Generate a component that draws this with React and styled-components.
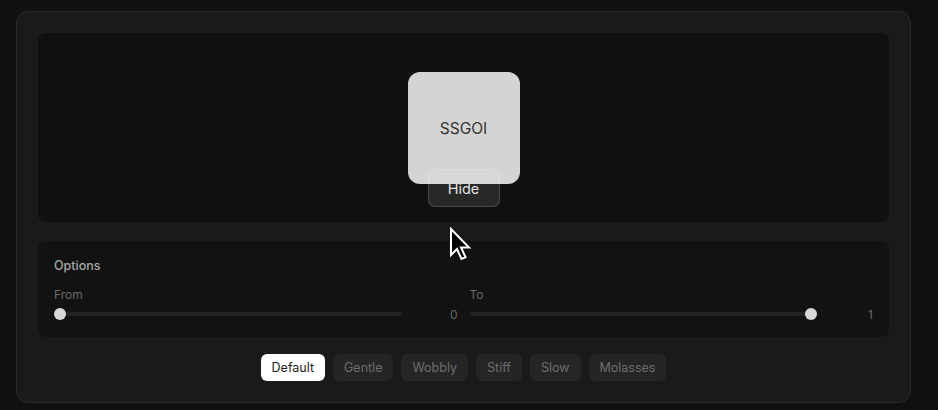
import React from 'react'
import styled, { createGlobalStyle } from 'styled-components'

const GlobalStyle = createGlobalStyle`
  html, body {
    margin: 0;
    background: #0f100f;
    font-family: Inter, "Noto Sans", sans-serif;
  }
`

const presets = ['Default', 'Gentle', 'Wobbly', 'Stiff', 'Slow', 'Molasses']

function Slider({ label, value }) {
  return (
    <Field>
      <FieldLabel>{label}</FieldLabel>
      <SliderRow>
        <Track>
          <Thumb style={{ left: `calc(${value} * (100% - 12px))` }} />
        </Track>
        <Value>{value}</Value>
      </SliderRow>
    </Field>
  )
}

function Cursor() {
  return (
    <CursorWrap>
      <svg width="24" height="36" viewBox="0 0 24 36">
        <path
          d="M2 2 L2 28 L8 22 L12.5 32 L16.5 30.2 L12 20.5 L20 20.5 Z"
          fill="#000"
          stroke="#fff"
          strokeWidth="2"
          strokeLinejoin="miter"
        />
      </svg>
    </CursorWrap>
  )
}

export default function App() {
  return (
    <>
      <GlobalStyle />
      <Page>
        <Card>
          <Preview>
            <Box>SSGOI</Box>
            <HideButton>Hide</HideButton>
          </Preview>
          <Options>
            <OptionsTitle>Options</OptionsTitle>
            <Sliders>
              <Slider label="From" value={0} />
              <Slider label="To" value={1} />
            </Sliders>
          </Options>
          <Presets>
            {presets.map((p, i) => (
              <Preset key={p} $active={i === 0}>{p}</Preset>
            ))}
          </Presets>
          <Cursor />
        </Card>
      </Page>
    </>
  )
}

const Page = styled.div`
  padding: 11px 27px 7px 16px;
`

const Card = styled.div`
  position: relative;
  box-sizing: border-box;
  width: 895px;
  height: 392px;
  padding: 21px;
  background: #1a1a1a;
  border: 1px solid #2a2a2a;
  border-radius: 12px;
  display: flex;
  flex-direction: column;
`

const Preview = styled.div`
  height: 189px;
  box-sizing: border-box;
  padding-top: 39px;
  background: #0f110f;
  border-radius: 8px;
  display: flex;
  flex-direction: column;
  align-items: center;
`

const Box = styled.div`
  width: 112px;
  height: 112px;
  border-radius: 12px;
  background: #d4d4d2;
  color: #333;
  font-size: 15.5px;
  display: flex;
  align-items: center;
  justify-content: center;
`

const HideButton = styled.button`
  position: relative;
  margin-top: -15px;
  width: 72px;
  height: 38px;
  border-radius: 7px;
  border: 1px solid rgba(255, 255, 255, 0.16);
  background: rgba(255, 255, 255, 0.1);
  color: #e2e2e2;
  font-family: inherit;
  font-size: 14.5px;
`

const Options = styled.div`
  margin-top: 19px;
  height: 96px;
  box-sizing: border-box;
  padding: 17px 16px 16px;
  background: #111211;
  border-radius: 8px;
`

const OptionsTitle = styled.div`
  color: #a8a8a8;
  font-size: 12.5px;
  font-weight: 500;
  line-height: 16px;
`

const Sliders = styled.div`
  margin-top: 13px;
  display: grid;
  grid-template-columns: 1fr 1fr;
  column-gap: 12px;
`

const Field = styled.div`
  display: flex;
  flex-direction: column;
  gap: 3px;
`

const FieldLabel = styled.div`
  color: #6b6b6b;
  font-size: 12px;
  line-height: 16px;
`

const SliderRow = styled.div`
  display: flex;
  align-items: center;
  gap: 16px;
  height: 16px;
`

const Track = styled.div`
  position: relative;
  flex: 1;
  height: 4px;
  border-radius: 2px;
  background: #232323;
`

const Thumb = styled.div`
  position: absolute;
  top: 50%;
  width: 12px;
  height: 12px;
  border-radius: 50%;
  background: #d8d8d8;
  transform: translateY(-50%);
`

const Value = styled.div`
  width: 40px;
  text-align: right;
  color: #666;
  font-size: 12px;
`

const Presets = styled.div`
  margin-top: 17px;
  display: flex;
  justify-content: center;
  gap: 8px;
`

const Preset = styled.button`
  height: 27px;
  padding: 0 11px;
  border: none;
  border-radius: 6px;
  font-family: inherit;
  font-size: 12.5px;
  background: ${p => (p.$active ? '#ffffff' : '#252525')};
  color: ${p => (p.$active ? '#222' : '#6e6e6e')};
`

const CursorWrap = styled.div`
  position: absolute;
  left: 432px;
  top: 215px;
  pointer-events: none;
`
